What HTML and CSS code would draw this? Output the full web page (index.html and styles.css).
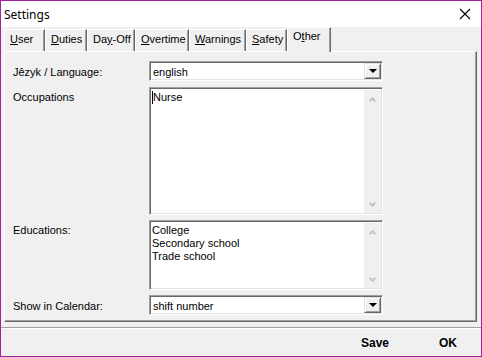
FILE: index.html
```html
<!DOCTYPE html>
<html lang="en">
<head>
  <meta charset="UTF-8">
  <title>Settings</title>
  <link rel="stylesheet" href="styles.css">
</head>
<body>

<div class="window">
  <div class="titlebar">
    <span class="title">Settings</span>
    <svg class="close" width="12" height="12" viewBox="0 0 12 12">
      <path d="M1 1 L11 11 M11 1 L1 11" stroke="#000" stroke-width="1.1" fill="none"/>
    </svg>
  </div>

  <div class="tabs">
    <div class="tab t-user"><u>U</u>ser</div>
    <div class="tab t-duties"><u>D</u>uties</div>
    <div class="tab t-dayoff">Da<u>y</u>-Off</div>
    <div class="tab t-overtime"><u>O</u>vertime</div>
    <div class="tab t-warnings"><u>W</u>arnings</div>
    <div class="tab t-safety"><u>S</u>afety</div>
    <div class="tab t-other active">O<u>t</u>her</div>
  </div>

  <div class="panel">
    <label class="lbl lbl-combo">Jêzyk / Language:</label>
    <div class="combo">
      <span class="combo-text">english</span>
      <span class="drop"><i></i></span>
    </div>

    <label class="lbl">Occupations</label>
    <div class="listbox">
      <div class="items">
        <div><span class="caret"></span>Nurse</div>
      </div>
      <div class="scroll">
        <span class="arr up"></span>
        <span class="arr down"></span>
      </div>
    </div>

    <label class="lbl">Educations:</label>
    <div class="listbox">
      <div class="items">
        <div>College</div>
        <div>Secondary school</div>
        <div>Trade school</div>
      </div>
      <div class="scroll">
        <span class="arr up"></span>
        <span class="arr down"></span>
      </div>
    </div>

    <label class="lbl lbl-combo">Show in Calendar:</label>
    <div class="combo">
      <span class="combo-text">shift number</span>
      <span class="drop"><i></i></span>
    </div>
  </div>

  <div class="footer">
    <button class="btn btn-save">Save</button>
    <button class="btn btn-ok">OK</button>
  </div>
</div>

</body>
</html>
```

FILE: styles.css
```css
body {
  margin: 0;
  background: #f0f0f0;
  font-family: 'Liberation Sans', Arial, sans-serif;
  font-size: 11px;
  color: #000;
}
.window {
  width: 482px;
  height: 357px;
  box-sizing: border-box;
  border: 1px solid #a3239f;
  background: #f0f0f0;
  display: flex;
  flex-direction: column;
}
.titlebar {
  height: 26px;
  background: #fff;
  display: flex;
  align-items: center;
  justify-content: space-between;
  padding: 0 10px 0 3px;
  flex-shrink: 0;
}
.title {
  font-family: 'Noto Sans', 'Open Sans', sans-serif;
  font-size: 12px;
}
.tabs {
  height: 24px;
  display: flex;
  align-items: flex-end;
  padding-left: 3px;
  flex-shrink: 0;
}
.tab {
  height: 22px;
  box-sizing: border-box;
  border-top: 1px solid #fff;
  border-left: 1px solid #fff;
  border-right: 1px solid #696969;
  box-shadow: inset -1px 0 #a0a0a0;
  padding: 3px 0 0 5px;
  white-space: nowrap;
}
.t-user { width: 41px; }
.t-duties { width: 42px; }
.t-dayoff { width: 48px; }
.t-overtime { width: 54px; }
.t-warnings { width: 57px; }
.t-safety { width: 41px; }
.t-other { width: 44px; }
.tab.active {
  height: 25px;
  padding-top: 2px;
  margin-bottom: -1px;
  background: #f0f0f0;
  position: relative;
  z-index: 1;
}
.panel {
  margin: 0 4px 0 3px;
  height: 271px;
  box-sizing: border-box;
  border-top: 1px solid #fff;
  border-left: 1px solid #fff;
  border-right: 1px solid #696969;
  border-bottom: 1px solid #696969;
  box-shadow: inset -1px -1px #a0a0a0;
  padding: 9px 0 0 8px;
  display: grid;
  grid-template-columns: 136px 234px;
  grid-template-rows: 21px 128px 70px 20px;
  row-gap: 5px;
  flex-shrink: 0;
}
.lbl {
  padding-top: 4px;
}
.lbl-combo {
  padding-top: 5px;
}
.combo, .listbox {
  box-sizing: border-box;
  border: 1px solid;
  border-color: #a0a0a0 #fff #fff #a0a0a0;
  box-shadow: inset 1px 1px #696969, inset -1px -1px #e3e3e3;
  background: #fff;
  display: flex;
}
.combo {
  height: 20px;
}
.combo-text {
  flex: 1;
  padding: 4px 0 0 3px;
}
.drop {
  width: 17px;
  margin: 1px 1px 1px 0;
  box-sizing: border-box;
  background: #f0f0f0;
  border: 1px solid;
  border-color: #e3e3e3 #696969 #696969 #e3e3e3;
  box-shadow: inset 1px 1px #fff, inset -1px -1px #a0a0a0;
  display: flex;
  align-items: center;
  justify-content: center;
}
.drop i {
  width: 0;
  height: 0;
  border-left: 4px solid transparent;
  border-right: 4px solid transparent;
  border-top: 4px solid #000;
}
.items {
  flex: 1;
  padding: 3px 0 0 2px;
  line-height: 13px;
}
.caret {
  display: inline-block;
  width: 1px;
  height: 13px;
  background: #000;
  vertical-align: top;
}
.scroll {
  width: 17px;
  margin: 2px 1px 1px 0;
  background: #f0f0f0;
  display: flex;
  flex-direction: column;
  justify-content: space-between;
  align-items: center;
  padding: 6px 0 5px;
  box-sizing: border-box;
}
.arr {
  width: 5px;
  height: 5px;
  border-left: 2px solid #c4c4c4;
  border-top: 2px solid #c4c4c4;
  box-sizing: border-box;
}
.arr.up {
  transform: rotate(45deg);
  margin-top: 2px;
}
.arr.down {
  transform: rotate(225deg);
  margin-bottom: 2px;
}
.footer {
  flex: 1;
  margin-top: 5px;
  border-top: 1px solid #a0a0a0;
  box-shadow: inset 0 1px #fff;
  display: flex;
  align-items: center;
  justify-content: flex-end;
  padding-right: 24px;
}
.btn {
  border: none;
  background: transparent;
  font-family: 'Liberation Sans', Arial, sans-serif;
  font-weight: bold;
  font-size: 12px;
  padding: 0;
  margin-top: 2px;
}
.btn-save {
  margin-right: 50px;
}
```
